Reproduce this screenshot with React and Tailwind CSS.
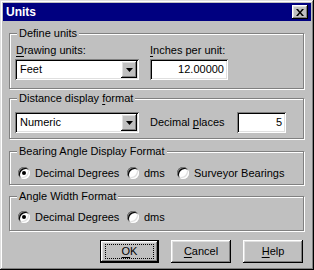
import React from 'react';

// Boîte de dialogue "Units" façon Windows 95
const sunken = 'shadow-[inset_1px_1px_#808080,inset_-1px_-1px_#fff,inset_2px_2px_#000,inset_-2px_-2px_#dfdfdf]';
const raised = 'shadow-[inset_-1px_-1px_#000,inset_1px_1px_#fff,inset_-2px_-2px_#808080,inset_2px_2px_#dfdfdf]';

function U({ children }) {
  return <span className="underline underline-offset-[2px]">{children}</span>;
}

function Group({ label, className, children }) {
  return (
    <div className={`relative ml-[6px] mr-[7px] border border-[#808080] shadow-[1px_1px_0_#fff,inset_1px_1px_0_#fff] ${className}`}>
      <span className="absolute -top-[8px] left-[7px] bg-[#c0c0c0] px-[2px] leading-[14px]">{label}</span>
      {children}
    </div>
  );
}

function Combo({ value, className }) {
  return (
    <div className={`flex h-[21px] items-center bg-white p-[2px] ${sunken} ${className}`}>
      <span className="flex-1 pl-[3px]">{value}</span>
      <div className={`flex h-[17px] w-[16px] items-center justify-center bg-[#c0c0c0] ${raised}`}>
        <svg width="7" height="4" viewBox="0 0 7 4"><path d="M0 0h7L3.5 4z" fill="#000" /></svg>
      </div>
    </div>
  );
}

function Field({ value, className }) {
  return (
    <div className={`flex h-[21px] items-center justify-end bg-white pr-[4px] ${sunken} ${className}`}>
      {value}
    </div>
  );
}

function Radio({ checked, label, className }) {
  return (
    <div className={`flex items-center ${className}`}>
      <div className={`flex h-[12px] w-[12px] items-center justify-center rounded-full bg-white ${sunken}`}>
        {checked && <div className="h-[4px] w-[4px] rounded-full bg-black" />}
      </div>
      <span className="ml-[5px]">{label}</span>
    </div>
  );
}

function Btn({ children, isDefault }) {
  if (isDefault) {
    return (
      <div className="h-[23px] w-[59px] border border-black">
        <div className={`flex h-full w-full items-center justify-center bg-[#c0c0c0] ${raised}`}>
          <div className="flex h-[15px] w-[49px] items-center justify-center border border-dotted border-black">{children}</div>
        </div>
      </div>
    );
  }
  return (
    <div className={`flex h-[23px] w-[60px] items-center justify-center bg-[#c0c0c0] ${raised}`}>{children}</div>
  );
}

export default function App() {
  return (
    <div className={`h-[270px] w-[314px] bg-[#c0c0c0] p-[3px] font-['Liberation_Sans',Arial,sans-serif] text-[11px] text-black shadow-[inset_-1px_-1px_#000,inset_1px_1px_#dfdfdf,inset_-2px_-2px_#808080,inset_2px_2px_#fff]`}>
      {/* Barre de titre */}
      <div className="flex h-[18px] items-center justify-between bg-[#000080] pl-[3px] pr-[3px]">
        <span className="text-[12px] font-bold text-white">Units</span>
        <div className={`flex h-[14px] w-[16px] items-center justify-center bg-[#c0c0c0] ${raised}`}>
          <svg width="8" height="7" viewBox="0 0 8 7">
            <path d="M0 0h2l2 2.5L6 0h2L5 3.5 8 7H6L4 4.5 2 7H0l3-3.5z" fill="#000" />
          </svg>
        </div>
      </div>

      <Group label="Define units" className="mt-[12px] h-[56px]">
        <div className="flex gap-[11px] px-[5px] pt-[9px]">
          <div className="flex w-[124px] flex-col">
            <span className="pl-[1px] leading-[14px]"><U>D</U>rawing units:</span>
            <Combo value="Feet" className="mt-[2px]" />
          </div>
          <div className="flex w-[78px] flex-col">
            <span className="leading-[14px]"><U>I</U>nches per unit:</span>
            <Field value="12.00000" className="mt-[2px]" />
          </div>
        </div>
      </Group>

      <Group label={<>Distance display <U>f</U>ormat</>} className="mt-[9px] h-[41px]">
        <div className="flex items-center px-[5px] pt-[13px]">
          <Combo value="Numeric" className="w-[124px]" />
          <span className="ml-[11px]">Decimal <U>p</U>laces</span>
          <Field value="5" className="ml-auto mr-[12px] w-[49px]" />
        </div>
      </Group>

      <Group label="Bearing Angle Display Format" className="mt-[12px] h-[34px]">
        <div className="flex items-center px-[8px] pt-[13px]">
          <Radio checked label="Decimal Degrees" className="w-[109px]" />
          <Radio label="dms" className="w-[50px]" />
          <Radio label="Surveyor Bearings" />
        </div>
      </Group>

      <Group label="Angle Width Format" className="mt-[11px] h-[35px]">
        <div className="flex items-center px-[8px] pt-[12px]">
          <Radio checked label="Decimal Degrees" className="w-[109px]" />
          <Radio label="dms" />
        </div>
      </Group>

      <div className="mt-[9px] flex justify-end gap-[12px] pr-[8px]">
        <Btn isDefault><U>O</U>K</Btn>
        <Btn><U>C</U>ancel</Btn>
        <Btn><U>H</U>elp</Btn>
      </div>
    </div>
  );
}
